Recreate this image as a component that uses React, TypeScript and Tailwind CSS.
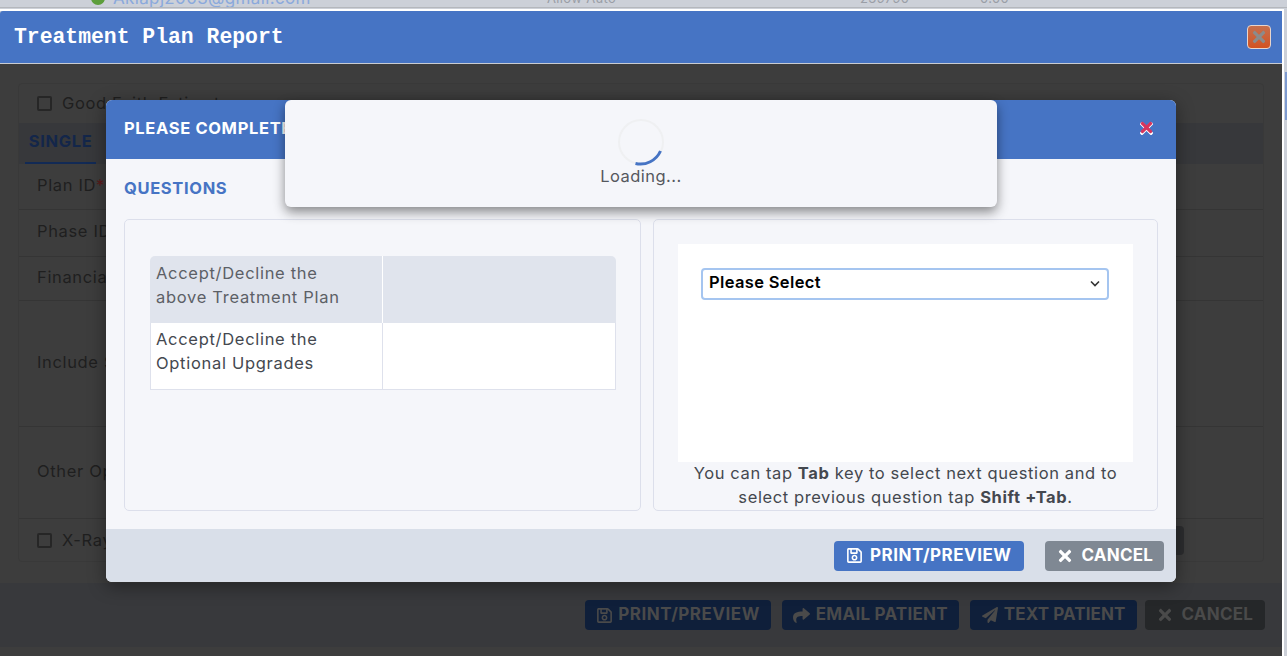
import { FaRegSave, FaShare, FaPaperPlane, FaTimes } from "react-icons/fa";

function DimRow({ h, label, star, border = true }: { h: string; label: string; star?: boolean; border?: boolean }) {
  return (
    <div className={`flex items-center pl-[18px] pb-[3px] text-[#1f1f1f] ${h} ${border ? "border-t border-[#353535]" : ""}`}>
      {label}
      {star && <span className="text-[#5c1a1a]">*</span>}
    </div>
  );
}

function DimButton({ icon, label, look }: { icon: React.ReactNode; label: string; look: string }) {
  return (
    <div className={`h-[30px] rounded-[4px] flex items-center text-[#4a4a4a] font-bold text-[17px] ${look}`}>
      {icon}
      <span>{label}</span>
    </div>
  );
}

export default function App() {
  return (
    <div className="relative w-[1287px] h-[656px] overflow-hidden bg-[#ccd0d8] font-['Inter','Liberation_Sans',sans-serif] text-[16.5px] tracking-[0.65px]">
      {/* Page peeking out above the dialog */}
      <div className="h-[8px] overflow-hidden relative border-b border-[#b4b7bc]">
        <div className="flex items-center text-[17px] tracking-[0.35px] leading-[16px] -mt-[10px] pl-[91px]">
          <span className="w-[14px] h-[14px] rounded-full bg-[#5d9e3c] mr-[8px] shrink-0" />
          <span className="text-[#8aa9dc] w-[434px]">Aklapj2003@gmail.com</span>
          <span className="text-[#9a9ea6] text-[13px] w-[313px]">Allow Auto</span>
          <span className="text-[#9a9ea6] text-[13px] w-[120px]">239790</span>
          <span className="text-[#9a9ea6] text-[13px]">0.00</span>
        </div>
      </div>

      {/* Sliver of the page at the right edge */}
      <div className="absolute right-0 top-[72px] w-[2px] h-[48px] bg-[#7d9ad0]" />

      {/* Treatment plan dialog */}
      <div className="w-[1284px] h-[648px] mt-[1px] border-t-[2px] border-r-[2px] border-white flex flex-col">
        <div className="h-[53px] shrink-0 bg-[#4674c4] border-b border-[#c9ccd2] rounded-tl-[3px] flex items-center justify-between pl-[14px] pr-[11px]">
          <span className="font-['Liberation_Mono',monospace] font-bold text-[21.4px] tracking-normal text-white pt-[1px]">Treatment Plan Report</span>
          <div className="w-[24px] h-[24px] rounded-[4px] border border-[#e8d5cc] bg-linear-to-b from-[#c56f4d] to-[#d2521f] flex items-center justify-center">
            <FaTimes className="text-[#8b8b8b] text-[18px]" />
          </div>
        </div>

        <div className="flex-1 bg-[#3d3d3d] flex flex-col min-h-0">
          <div className="h-[519px] shrink-0 px-[18px] pt-[19px]">
            <div className="h-[479px] border border-[#393939] rounded-[4px] flex flex-col overflow-hidden">
              <div className="h-[39px] shrink-0 flex items-center pl-[18px] pb-[1px] gap-[10px] text-[#1f1f1f]">
                <span className="w-[15px] h-[15px] rounded-[2px] border-2 border-[#262626]" />
                Good Faith Estimate
              </div>
              <div className="h-[41px] shrink-0 bg-[#37383b] flex">
                <div className="ml-[6px] w-[71px] h-full border-b-2 border-[#122a55] flex items-center justify-center pb-[2px] text-[#13264a] font-bold">
                  SINGLE
                </div>
              </div>
              <DimRow h="h-[45px]" label="Plan ID" star border={false} />
              <DimRow h="h-[47px]" label="Phase ID" />
              <DimRow h="h-[44px]" label="Financial" />
              <DimRow h="h-[126px]" label="Include Sections" />
              <DimRow h="h-[92px]" label="Other Options" />
              <div className="flex-1 border-t border-[#353535] flex items-center justify-between pl-[18px] pr-[79px] text-[#1f1f1f]">
                <div className="flex items-center gap-[10px]">
                  <span className="w-[15px] h-[15px] rounded-[2px] border-2 border-[#262626]" />
                  X-Ray
                </div>
                <div className="w-[40px] h-[29px] rounded-[4px] bg-[#2c2d2f]" />
              </div>
            </div>
          </div>
          <div className="h-[64px] shrink-0 bg-[#38393c] flex items-center justify-end pr-[17px]">
            <DimButton look="bg-[#0f1f3a] px-[11px] gap-[5px] tracking-[0.5px] mr-[11px]" icon={<FaRegSave className="text-[17px]" />} label="PRINT/PREVIEW" />
            <DimButton look="bg-[#0f1f3a] px-[11px] gap-[6px] tracking-[0.25px] mr-[11px]" icon={<FaShare className="text-[17px]" />} label="EMAIL PATIENT" />
            <DimButton look="bg-[#0f1f3a] pl-[12px] pr-[11px] gap-[6px] tracking-[0.1px] mr-[8px]" icon={<FaPaperPlane className="text-[16px]" />} label="TEXT PATIENT" />
            <DimButton look="bg-[#252729] pl-[11px] pr-[12px] gap-[8px] tracking-[0.2px]" icon={<FaTimes className="text-[18px]" />} label="CANCEL" />
          </div>
        </div>
      </div>

      {/* Questions modal */}
      <div className="absolute left-[106px] top-[100px] w-[1070px] h-[482px] rounded-[6px] overflow-hidden bg-[#f5f6fa] flex flex-col shadow-[0_4px_18px_rgba(0,0,0,0.4)]">
        <div className="h-[59px] shrink-0 bg-[#4674c4] flex items-center justify-between pl-[18px] pr-[23px] pb-[3px]">
          <span className="text-white font-bold">PLEASE COMPLETE</span>
          <span className="relative w-[14px] h-[14px] flex items-center justify-center">
            <FaTimes className="absolute text-white text-[19px] top-[-2px]" />
            <FaTimes className="absolute text-[#d6345c] text-[17px] top-[-2px]" />
          </span>
        </div>
        <div className="flex-1 min-h-0 px-[18px] flex flex-col">
          <div className="h-[60px] shrink-0 flex items-center pb-[2px] text-[#4674c4] font-bold">QUESTIONS</div>
          <div className="flex gap-[12px] h-[292px]">
            <div className="w-[517px] border border-[#dcdfeb] rounded-[5px] pt-[36px] px-[25px]">
              <div className="grid grid-cols-[233px_233px] leading-[24px] tracking-[0.7px]">
                <div className="h-[67px] bg-[#e0e4ed] text-[#5c6066] pl-[6px] pt-[5px] rounded-tl-[5px] border-r border-white">
                  Accept/Decline the<br />above Treatment Plan
                </div>
                <div className="h-[67px] bg-[#e0e4ed] rounded-tr-[5px]" />
                <div className="h-[67px] bg-white text-[#44484f] pl-[5px] pt-[4px] border-l border-b border-r border-[#dee1ec]">
                  Accept/Decline the<br />Optional Upgrades
                </div>
                <div className="h-[67px] bg-white border-r border-b border-[#dee1ec]" />
              </div>
            </div>
            <div className="w-[505px] border border-[#dcdfeb] rounded-[5px] px-[24px] pt-[24px] flex flex-col">
              <div className="h-[218px] shrink-0 bg-white pt-[24px] px-[23px]">
                <div className="h-[32px] w-[408px] rounded-[4px] border-2 border-[#a5c5f0] flex items-center justify-between pl-[6px] pr-[7px] pb-[4px] font-semibold tracking-[0.35px] text-black">
                  <span>Please Select</span>
                  <svg width="10" height="7" viewBox="0 0 10 7" fill="none" className="mt-[3px]">
                    <path d="M1 1.5 L5 5.5 L9 1.5" stroke="#333" strokeWidth="1.6" />
                  </svg>
                </div>
              </div>
              <div className="text-center leading-[24px] text-[#44484f] -mt-[1px] tracking-[0.6px] whitespace-nowrap">
                You can tap <b>Tab</b> key to select next question and to<br />
                select previous question tap <b>Shift +Tab</b>.
              </div>
            </div>
          </div>
        </div>
        <div className="h-[53px] shrink-0 bg-[#d9dfe9] flex items-center justify-end gap-[21px] pr-[12px]">
          <div className="h-[30px] rounded-[4px] bg-[#4674c4] text-white font-bold text-[17px] tracking-[0.5px] px-[12px] flex items-center gap-[7px]">
            <FaRegSave className="text-[17px]" />
            PRINT/PREVIEW
          </div>
          <div className="h-[30px] rounded-[4px] bg-[#7f8893] text-white font-bold text-[17px] tracking-[0.2px] pl-[11px] pr-[11px] flex items-center gap-[8px]">
            <FaTimes className="text-[18px]" />
            CANCEL
          </div>
        </div>
      </div>

      {/* Loading popup */}
      <div className="absolute left-[285px] top-[100px] w-[712px] h-[107px] rounded-[6px] bg-[#f5f6fa] shadow-[0_5px_12px_rgba(0,0,0,0.45)] flex flex-col items-center pt-[18px]">
        <svg width="48" height="48" viewBox="0 0 48 48">
          <circle cx="24" cy="24" r="22" fill="none" stroke="#eff0f2" strokeWidth="2" />
          <path d="M 43.5 33 A 22 22 0 0 1 18.5 45.5" fill="none" stroke="#4674c4" strokeWidth="3" />
        </svg>
        <span className="leading-[20px] text-[#55585e] tracking-[0.45px]">Loading...</span>
      </div>
    </div>
  );
}
